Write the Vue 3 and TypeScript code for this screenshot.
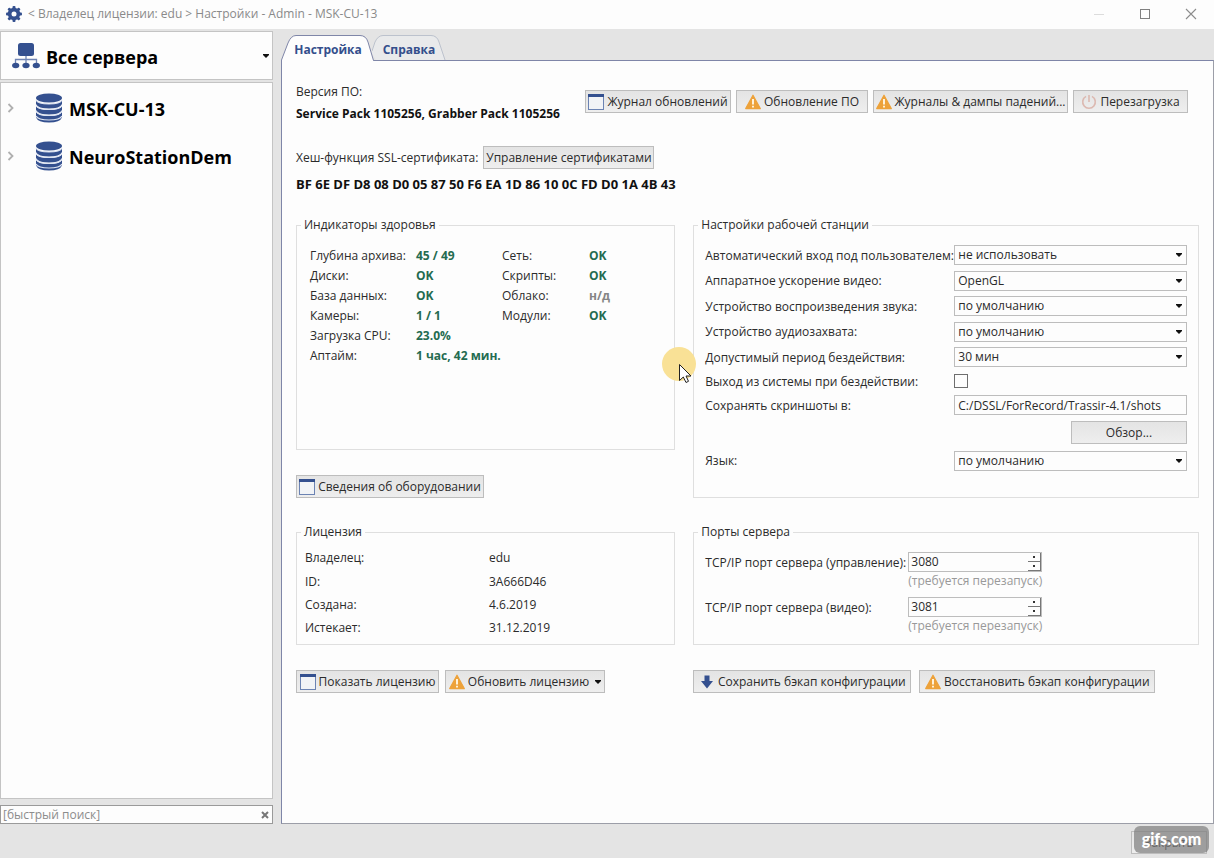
<script setup lang="ts">
import { ref } from 'vue'

const servers = ['MSK-CU-13', 'NeuroStationDem']

const healthMain = [
  ['Глубина архива:', '45 / 49'],
  ['Диски:', 'OK'],
  ['База данных:', 'OK'],
  ['Камеры:', '1 / 1'],
  ['Загрузка CPU:', '23.0%'],
  ['Аптайм:', '1 час, 42 мин.'],
]
const healthExtra = [
  ['Сеть:', 'OK'],
  ['Скрипты:', 'OK'],
  ['Облако:', 'н/д'],
  ['Модули:', 'OK'],
]
const license = [
  ['Владелец:', 'edu'],
  ['ID:', '3A666D46'],
  ['Создана:', '4.6.2019'],
  ['Истекает:', '31.12.2019'],
]
const selects = [
  { id: 'autologin', label: 'Автоматический вход под пользователем:', value: 'не использовать' },
  { id: 'video', label: 'Аппаратное ускорение видео:', value: 'OpenGL' },
  { id: 'sound', label: 'Устройство воспроизведения звука:', value: 'по умолчанию' },
  { id: 'capture', label: 'Устройство аудиозахвата:', value: 'по умолчанию' },
  { id: 'idle', label: 'Допустимый период бездействия:', value: '30 мин' },
]
const ports = ref([
  { id: 'port-control', label: 'TCP/IP порт сервера (управление):', value: 3080 },
  { id: 'port-video', label: 'TCP/IP порт сервера (видео):', value: 3081 },
])
const shotsPath = ref('C:/DSSL/ForRecord/Trassir-4.1/shots')
const logoutOnIdle = ref(false)
const search = ref('')
</script>

<template>
  <svg class="defs" width="0" height="0" aria-hidden="true">
    <symbol id="i-window" viewBox="0 0 16 16">
      <rect x="0.5" y="0.5" width="15" height="15" fill="#f1f3f6" stroke="#6b83b3" />
      <rect x="0" y="0" width="16" height="3" fill="#34508f" />
    </symbol>
    <symbol id="i-warn" viewBox="0 0 16 16">
      <path d="M8 1.2 L15.3 14.6 H0.7 Z" fill="#eda23a" stroke="#eda23a" stroke-width="1.2" stroke-linejoin="round" />
      <path d="M8 5 V10.4 M8 11.8 V13.6" stroke="#fff6e2" stroke-width="1.9" />
    </symbol>
    <symbol id="i-power" viewBox="0 0 16 16">
      <path d="M5 2.4 A6.3 6.3 0 1 0 11 2.4 M8 1 V8" fill="none" stroke="#dcb9b1" stroke-width="1.6" />
    </symbol>
    <symbol id="i-down" viewBox="0 0 16 16">
      <path d="M5.5 1.5 H10.5 V7 H14 L8 14.5 L2 7 H5.5 Z" fill="#34508f" />
    </symbol>
    <symbol id="i-arrow" viewBox="0 0 6 4">
      <path d="M0 0 H6 V1 L3 4 L0 1 Z" fill="#111" />
    </symbol>
    <symbol id="i-db" viewBox="0 0 28 30">
      <ellipse cx="14" cy="5" rx="13" ry="4.5" fill="#34508f" />
      <g fill="#34508f">
        <path d="M1 7 Q3 11 14 11 T27 7 V11 Q25 15.500 14 15.500 T1 11 Z" />
        <path d="M1 13 Q3 17 14 17 T27 13 V17 Q25 21.500 14 21.500 T1 17 Z" />
        <path d="M1 19 Q3 23 14 23 T27 19 V24.500 Q25 29.500 14 29.500 T1 24.500 Z" />
      </g>
      <path d="M1 7 Q3 11 14 11 T27 7 M1 12.500 Q3 16.500 14 16.500 T27 12.500 M1 18 Q3 22.500 14 22.500 T27 18 M1 23 Q3 27 14 27 T27 23" fill="none" stroke="#dfe5f2" stroke-width="1.2" />
    </symbol>
  </svg>

  <div class="app">
    <header class="titlebar">
      <svg class="gear" viewBox="0 0 16 16" width="16" height="16" aria-hidden="true">
        <g fill="#34508f">
          <rect x="6.500" y="0" width="3" height="16" rx="1" />
          <rect x="6.500" y="0" width="3" height="16" rx="1" transform="rotate(45 8 8)" />
          <rect x="6.500" y="0" width="3" height="16" rx="1" transform="rotate(90 8 8)" />
          <rect x="6.500" y="0" width="3" height="16" rx="1" transform="rotate(135 8 8)" />
          <circle cx="8" cy="8" r="6.200" />
        </g>
        <circle cx="8" cy="8" r="2.500" fill="#fdfdfd" />
      </svg>
      <span class="title">&lt; Владелец лицензии: edu &gt; Настройки - Admin - MSK-CU-13</span>
      <div class="window-buttons">
        <button type="button" aria-label="Свернуть">
          <svg width="12" height="12" viewBox="0 0 12 12"><path d="M1 6.500 H11" stroke="#dcdcdc" /></svg>
        </button>
        <button type="button" aria-label="Развернуть">
          <svg width="12" height="12" viewBox="0 0 12 12"><rect x="1.500" y="1.500" width="9" height="9" fill="none" stroke="#808080" /></svg>
        </button>
        <button type="button" aria-label="Закрыть окно">
          <svg width="12" height="12" viewBox="0 0 12 12"><path d="M1 1 L11 11 M11 1 L1 11" stroke="#8c8c8c" stroke-width="1.1" /></svg>
        </button>
      </div>
    </header>

    <div class="body">
      <aside class="sidebar">
        <button type="button" class="scope">
          <svg width="28" height="26" viewBox="0 0 28 26" aria-hidden="true">
            <rect x="6" y="0" width="16" height="13" rx="2.500" fill="#34508f" />
            <path d="M14 13 V20 M3.500 20 V16.500 H24.500 V20" fill="none" stroke="#6f84b4" stroke-width="1.300" />
            <ellipse cx="3.700" cy="22.500" rx="3.600" ry="2.800" fill="#34508f" />
            <ellipse cx="14" cy="22.500" rx="3.600" ry="2.800" fill="#34508f" />
            <ellipse cx="24.300" cy="22.500" rx="3.600" ry="2.800" fill="#34508f" />
          </svg>
          <span>Все сервера</span>
          <svg class="caret" width="6" height="4"><use href="#i-arrow" /></svg>
        </button>
        <ul class="tree">
          <li v-for="name in servers" :key="name">
            <button type="button">
              <svg width="8" height="10" viewBox="0 0 8 10" aria-hidden="true"><path d="M1.500 1 L5.500 5 L1.500 9" fill="none" stroke="#b0b0b0" stroke-width="1.800" /></svg>
              <svg class="db" width="28" height="30" aria-hidden="true"><use href="#i-db" /></svg>
              <span>{{ name }}</span>
            </button>
          </li>
        </ul>
        <div class="search">
          <input v-model="search" type="text" placeholder="[быстрый поиск]" aria-label="Быстрый поиск" />
          <button type="button" aria-label="Очистить">
            <svg width="8" height="8" viewBox="0 0 8 8"><path d="M1 1 L7 7 M7 1 L1 7" stroke="#777" stroke-width="2" /></svg>
          </button>
        </div>
      </aside>

      <main class="main">
        <div class="tabs" role="tablist">
          <button type="button" role="tab" aria-selected="true" class="tab active">
            <svg viewBox="0 0 94 28" width="94" height="28" aria-hidden="true">
              <path class="fill" d="M0.500 28 L0.500 26 L7 9 Q10 1.500 15 1.500 H79 Q85 1.500 87 8 L92.500 26.500 V28 Z" />
              <path class="edge" d="M0.500 28 V26 L7 9 Q10 1.500 15 1.500 H79 Q85 1.500 87 8 L92.500 26.500 H94" />
            </svg>
            <span>Настройка</span>
          </button>
          <button type="button" role="tab" aria-selected="false" class="tab">
            <svg viewBox="0 0 74 28" width="74" height="28" aria-hidden="true">
              <path class="fill" d="M4 26 L-1 18 L3 8 Q6 1.500 11 1.500 H59 Q65 1.500 67 8 L73 26 Z" />
              <path class="edge" d="M0 17 L3 8 Q6 1.500 11 1.500 H59 Q65 1.500 67 8 L73 26" />
            </svg>
            <span>Справка</span>
          </button>
        </div>

        <section class="panel">
          <div class="head">
            <div class="version">
              <div>Версия ПО:</div>
              <strong>Service Pack 1105256, Grabber Pack 1105256</strong>
            </div>
            <div class="actions">
              <button type="button" class="btn"><svg class="ic"><use href="#i-window" /></svg>Журнал обновлений</button>
              <button type="button" class="btn"><svg class="ic"><use href="#i-warn" /></svg>Обновление ПО</button>
              <button type="button" class="btn"><svg class="ic"><use href="#i-warn" /></svg>Журналы &amp; дампы падений...</button>
              <button type="button" class="btn"><svg class="ic"><use href="#i-power" /></svg>Перезагрузка</button>
            </div>
          </div>

          <div class="ssl">
            <span>Хеш-функция SSL-сертификата:</span>
            <button type="button" class="btn">Управление сертификатами</button>
          </div>
          <strong class="hash">BF 6E DF D8 08 D0 05 87 50 F6 EA 1D 86 10 0C FD D0 1A 4B 43</strong>

          <div class="groups">
            <div class="left-col">
              <fieldset class="health">
                <legend>Индикаторы здоровья</legend>
                <div class="health-lists">
                  <dl class="main-list">
                    <template v-for="[k, v] in healthMain" :key="k"><dt>{{ k }}</dt><dd>{{ v }}</dd></template>
                  </dl>
                  <dl class="extra-list">
                    <template v-for="[k, v] in healthExtra" :key="k"><dt>{{ k }}</dt><dd :class="{ na: v === 'н/д' }">{{ v }}</dd></template>
                  </dl>
                </div>
              </fieldset>
              <button type="button" class="btn hardware"><svg class="ic"><use href="#i-window" /></svg>Сведения об оборудовании</button>
            </div>

            <fieldset class="station">
              <legend>Настройки рабочей станции</legend>
              <div class="form">
                <template v-for="s in selects" :key="s.id">
                  <label :for="s.id">{{ s.label }}</label>
                  <div class="combo">
                    <select :id="s.id"><option>{{ s.value }}</option></select>
                    <svg width="6" height="4" aria-hidden="true"><use href="#i-arrow" /></svg>
                  </div>
                </template>
                <label for="idle-logout">Выход из системы при бездействии:</label>
                <input id="idle-logout" v-model="logoutOnIdle" type="checkbox" />
                <label for="shots">Сохранять скриншоты в:</label>
                <input id="shots" v-model="shotsPath" class="text" type="text" />
                <button type="button" class="btn browse">Обзор...</button>
                <label for="lang">Язык:</label>
                <div class="combo">
                  <select id="lang"><option>по умолчанию</option></select>
                  <svg width="6" height="4" aria-hidden="true"><use href="#i-arrow" /></svg>
                </div>
              </div>
            </fieldset>

            <fieldset class="license">
              <legend>Лицензия</legend>
              <dl>
                <template v-for="[k, v] in license" :key="k"><dt>{{ k }}</dt><dd>{{ v }}</dd></template>
              </dl>
            </fieldset>

            <fieldset class="ports">
              <legend>Порты сервера</legend>
              <div class="port-form">
                <template v-for="p in ports" :key="p.id">
                  <label :for="p.id">{{ p.label }}</label>
                  <div class="spin">
                    <input :id="p.id" v-model="p.value" type="number" />
                    <div class="steps">
                      <button type="button" aria-label="Увеличить" @click="p.value++"><i></i></button>
                      <button type="button" aria-label="Уменьшить" @click="p.value--"><i></i></button>
                    </div>
                  </div>
                  <small>(требуется перезапуск)</small>
                </template>
              </div>
            </fieldset>
          </div>

          <div class="bottom">
            <div class="bottom-left">
              <button type="button" class="btn"><svg class="ic"><use href="#i-window" /></svg>Показать лицензию</button>
              <button type="button" class="btn"><svg class="ic"><use href="#i-warn" /></svg>Обновить лицензию<svg class="more" width="6" height="4"><use href="#i-arrow" /></svg></button>
            </div>
            <div class="bottom-right">
              <button type="button" class="btn"><svg class="ic"><use href="#i-down" /></svg>Сохранить бэкап конфигурации</button>
              <button type="button" class="btn"><svg class="ic"><use href="#i-warn" /></svg>Восстановить бэкап конфигурации</button>
            </div>
          </div>
        </section>
      </main>
    </div>

    <footer class="footer">
      <button type="button" class="btn close">Закрыть</button>
    </footer>

    <div class="watermark">gifs.com</div>
    <svg class="pointer" width="34" height="38" viewBox="0 0 34 38" aria-hidden="true">
      <circle cx="17" cy="17" r="17" fill="#f9e196" />
      <path d="M17.500 17.500 V33.500 L21.300 30 L24 35.500 L26.500 34.300 L24 29 H29 Z" fill="#fff" stroke="#222" stroke-linejoin="round" />
    </svg>
  </div>
</template>

<style>
body {
  margin: 0;
  background: #e4e4e4;
}
</style>

<style scoped>
.defs {
  position: absolute;
}
.app {
  position: relative;
  display: flex;
  flex-direction: column;
  min-height: 100vh;
  background: #e4e4e4;
  color: #2b2b2b;
  font: 12px/16px "Open Sans", "Noto Sans", sans-serif;
  white-space: nowrap;
}
.app * {
  box-sizing: border-box;
}
button,
input,
select {
  margin: 0;
  padding: 0;
  border: 0;
  border-radius: 0;
  background: none;
  color: inherit;
  font: inherit;
  outline: none;
}
svg {
  display: block;
  flex: none;
}
dl,
dd,
ul {
  margin: 0;
  padding: 0;
}
ul {
  list-style: none;
}
.titlebar {
  display: flex;
  align-items: center;
  height: 29px;
  padding: 0 17px 2px 6px;
  background: #fdfdfd;
  color: #8a8a8a;
}
.title {
  flex: 1;
  margin-left: 6px;
}
.window-buttons {
  display: flex;
  gap: 34px;
}
.window-buttons button {
  width: 12px;
  height: 12px;
}
.body {
  display: flex;
  flex: 1;
  gap: 8px;
}
.sidebar {
  display: flex;
  flex-direction: column;
  width: 273px;
  padding-top: 2px;
  color: #000;
  font-size: 18px;
  line-height: 24px;
  font-weight: 700;
}
.scope {
  display: flex;
  align-items: center;
  gap: 6px;
  height: 49px;
  padding: 0 3px 0 11px;
  border: 1px solid #c4c4c4;
  background: #fdfdfd;
}
.scope span,
.tree span {
  padding-top: 2px;
}
.caret {
  margin-left: auto;
}
.tree {
  flex: 1;
  margin-top: 2px;
  border: 1px solid #c4c4c4;
  background: #fdfdfd;
}
.tree button {
  display: flex;
  align-items: center;
  width: 100%;
  height: 48px;
  padding: 2px 0 0 6px;
}
.db {
  margin: 0 6px 0 20px;
}
.search {
  display: flex;
  align-items: center;
  height: 19px;
  margin-top: 6px;
  padding: 0 3px 0 2px;
  border: 1px solid #9a9a9a;
  background: #fdfdfd;
  font-size: 12px;
  line-height: 16px;
  font-weight: 400;
}
.search input {
  flex: 1;
  min-width: 0;
}
.search input::placeholder {
  color: #8c8c8c;
  opacity: 1;
}
.main {
  display: flex;
  flex: 1;
  flex-direction: column;
  min-width: 0;
  padding-top: 5px;
}
.tabs {
  display: flex;
  height: 26px;
}
.tab {
  display: grid;
  z-index: 0;
  width: 72px;
  height: 28px;
  color: #344f8c;
  font-weight: 700;
}
.tab.active {
  z-index: 1;
  width: 91px;
}
.tab svg,
.tab span {
  grid-area: 1 / 1;
}
.tab span {
  align-self: center;
  justify-self: center;
  padding-top: 4px;
}
.tab .fill {
  fill: #e9eaeb;
}
.tab .edge {
  fill: none;
  stroke: #bcc2cd;
}
.tab.active .fill {
  fill: #fdfdfd;
}
.tab.active .edge {
  stroke: #7f86a8;
}
.panel {
  flex: 1;
  padding: 20px 14px 20px;
  border: 1px solid #9c9ea8;
  border-top-color: #7f86a8;
  border-left-color: #7f86a8;
  background: #fdfdfd;
}
strong {
  color: #111;
  font-weight: 700;
}
.head {
  display: flex;
  justify-content: space-between;
  line-height: 22px;
}
.actions {
  display: grid;
  grid-template-columns: 146px 132px 195px 115px;
  gap: 5px;
  margin: 9px 11px 0 0;
  align-items: start;
}
.btn {
  display: flex;
  align-items: center;
  justify-content: center;
  gap: 3px;
  height: 23px;
  border: 1px solid #bdbdbd;
  background: linear-gradient(#e4e4e4, #eeeeee);
  line-height: 16px;
}
.ic {
  width: 16px;
  height: 16px;
}
.ssl {
  display: flex;
  align-items: center;
  gap: 5px;
  margin-top: 21px;
}
.ssl .btn {
  width: 171px;
}
.hash {
  display: block;
  margin: 5px 0 23px;
  font-size: 13px;
  line-height: 20px;
}
.groups,
.bottom {
  display: grid;
  grid-template-columns: minmax(0, 3fr) minmax(0, 4fr);
  gap: 26px 18px;
}
.left-col {
  display: flex;
  flex-direction: column;
  gap: 25px;
}
.hardware {
  align-self: flex-start;
  width: 188px;
}
fieldset {
  min-width: 0;
  margin: 0;
  padding: 0;
  border: 1px solid #dfdfdf;
}
legend {
  padding: 0 3px;
}
.health {
  flex: 1;
  padding: 13px 13px 0;
}
.health legend {
  margin-left: -9px;
}
.health-lists {
  display: flex;
  line-height: 20px;
}
.health-lists dl {
  display: grid;
  align-content: start;
}
.main-list {
  grid-template-columns: 106px 86px;
}
.extra-list {
  grid-template-columns: 87px 60px;
}
.health dd {
  color: #246b50;
  font-weight: 700;
}
.health dd.na {
  color: #858585;
}
.station {
  padding: 9px 11px 23px;
}
.station legend,
.ports legend {
  margin-left: -7px;
}
.form {
  display: grid;
  grid-template-columns: 249px minmax(0, 1fr);
  grid-template-rows: 26px 25px 26px 25px 26px 22px 26px 29px 27px;
  align-items: center;
}
.form label,
.port-form label {
  padding-top: 1px;
}
.combo {
  display: grid;
  align-items: center;
}
.combo select,
.combo svg {
  grid-area: 1 / 1;
}
.combo svg {
  justify-self: end;
  margin-right: 5px;
  pointer-events: none;
}
select,
.text {
  width: 100%;
  height: 20px;
  padding: 0 3px;
  border: 1px solid #bdbdbd;
  background: #fdfdfd;
  appearance: none;
}
input[type='checkbox'] {
  width: 14px;
  height: 14px;
  border: 1px solid #6e6e6e;
  background: #fdfdfd;
  appearance: none;
}
.browse {
  grid-column: 2;
  justify-self: end;
  width: 116px;
}
.license {
  padding: 6px 8px 4px;
}
.license legend {
  margin-left: -4px;
}
.license dl {
  display: grid;
  grid-template-columns: 184px minmax(0, 1fr);
  grid-template-rows: 24px 23px 23px 24px;
  align-items: center;
}
.ports {
  padding: 12px 11px 0;
}
.port-form {
  display: grid;
  grid-template-columns: 203px 134px;
  grid-template-rows: 20px 25px 20px 18px;
  align-items: center;
}
.port-form small {
  grid-column: 2;
  align-self: start;
  padding-top: 1px;
  color: #999;
  font-size: 12px;
}
.spin {
  display: flex;
  height: 20px;
  border: 1px solid #bdbdbd;
  background: #fdfdfd;
}
.spin input {
  flex: 1;
  min-width: 0;
  padding: 0 2px;
  appearance: textfield;
}
.spin input::-webkit-inner-spin-button {
  appearance: none;
}
.steps {
  display: grid;
  grid-template-rows: 9px 9px;
  width: 13px;
}
.steps button {
  display: grid;
  place-items: center;
  border-right: 1px solid #777;
  border-bottom: 1px solid #777;
}
.steps i {
  width: 2px;
  height: 2px;
  background: #333;
}
.bottom {
  margin-top: 25px;
}
.bottom-left {
  display: grid;
  grid-template-columns: 143px 160px;
  gap: 6px;
}
.bottom-right {
  display: grid;
  grid-template-columns: 218px 236px;
  gap: 8px;
}
.more {
  margin-left: 3px;
}
.footer {
  display: flex;
  justify-content: flex-end;
  height: 34px;
  padding: 7px 7px 0;
}
.close {
  width: 76px;
}
.watermark {
  position: absolute;
  right: 5px;
  bottom: 5px;
  width: 75px;
  height: 27px;
  border-radius: 6px;
  background: rgba(125, 125, 125, 0.7);
  color: #fff;
  font: 900 16px/25px Lato, sans-serif;
  text-align: center;
}
.pointer {
  position: absolute;
  left: 662px;
  top: 347px;
}
</style>
